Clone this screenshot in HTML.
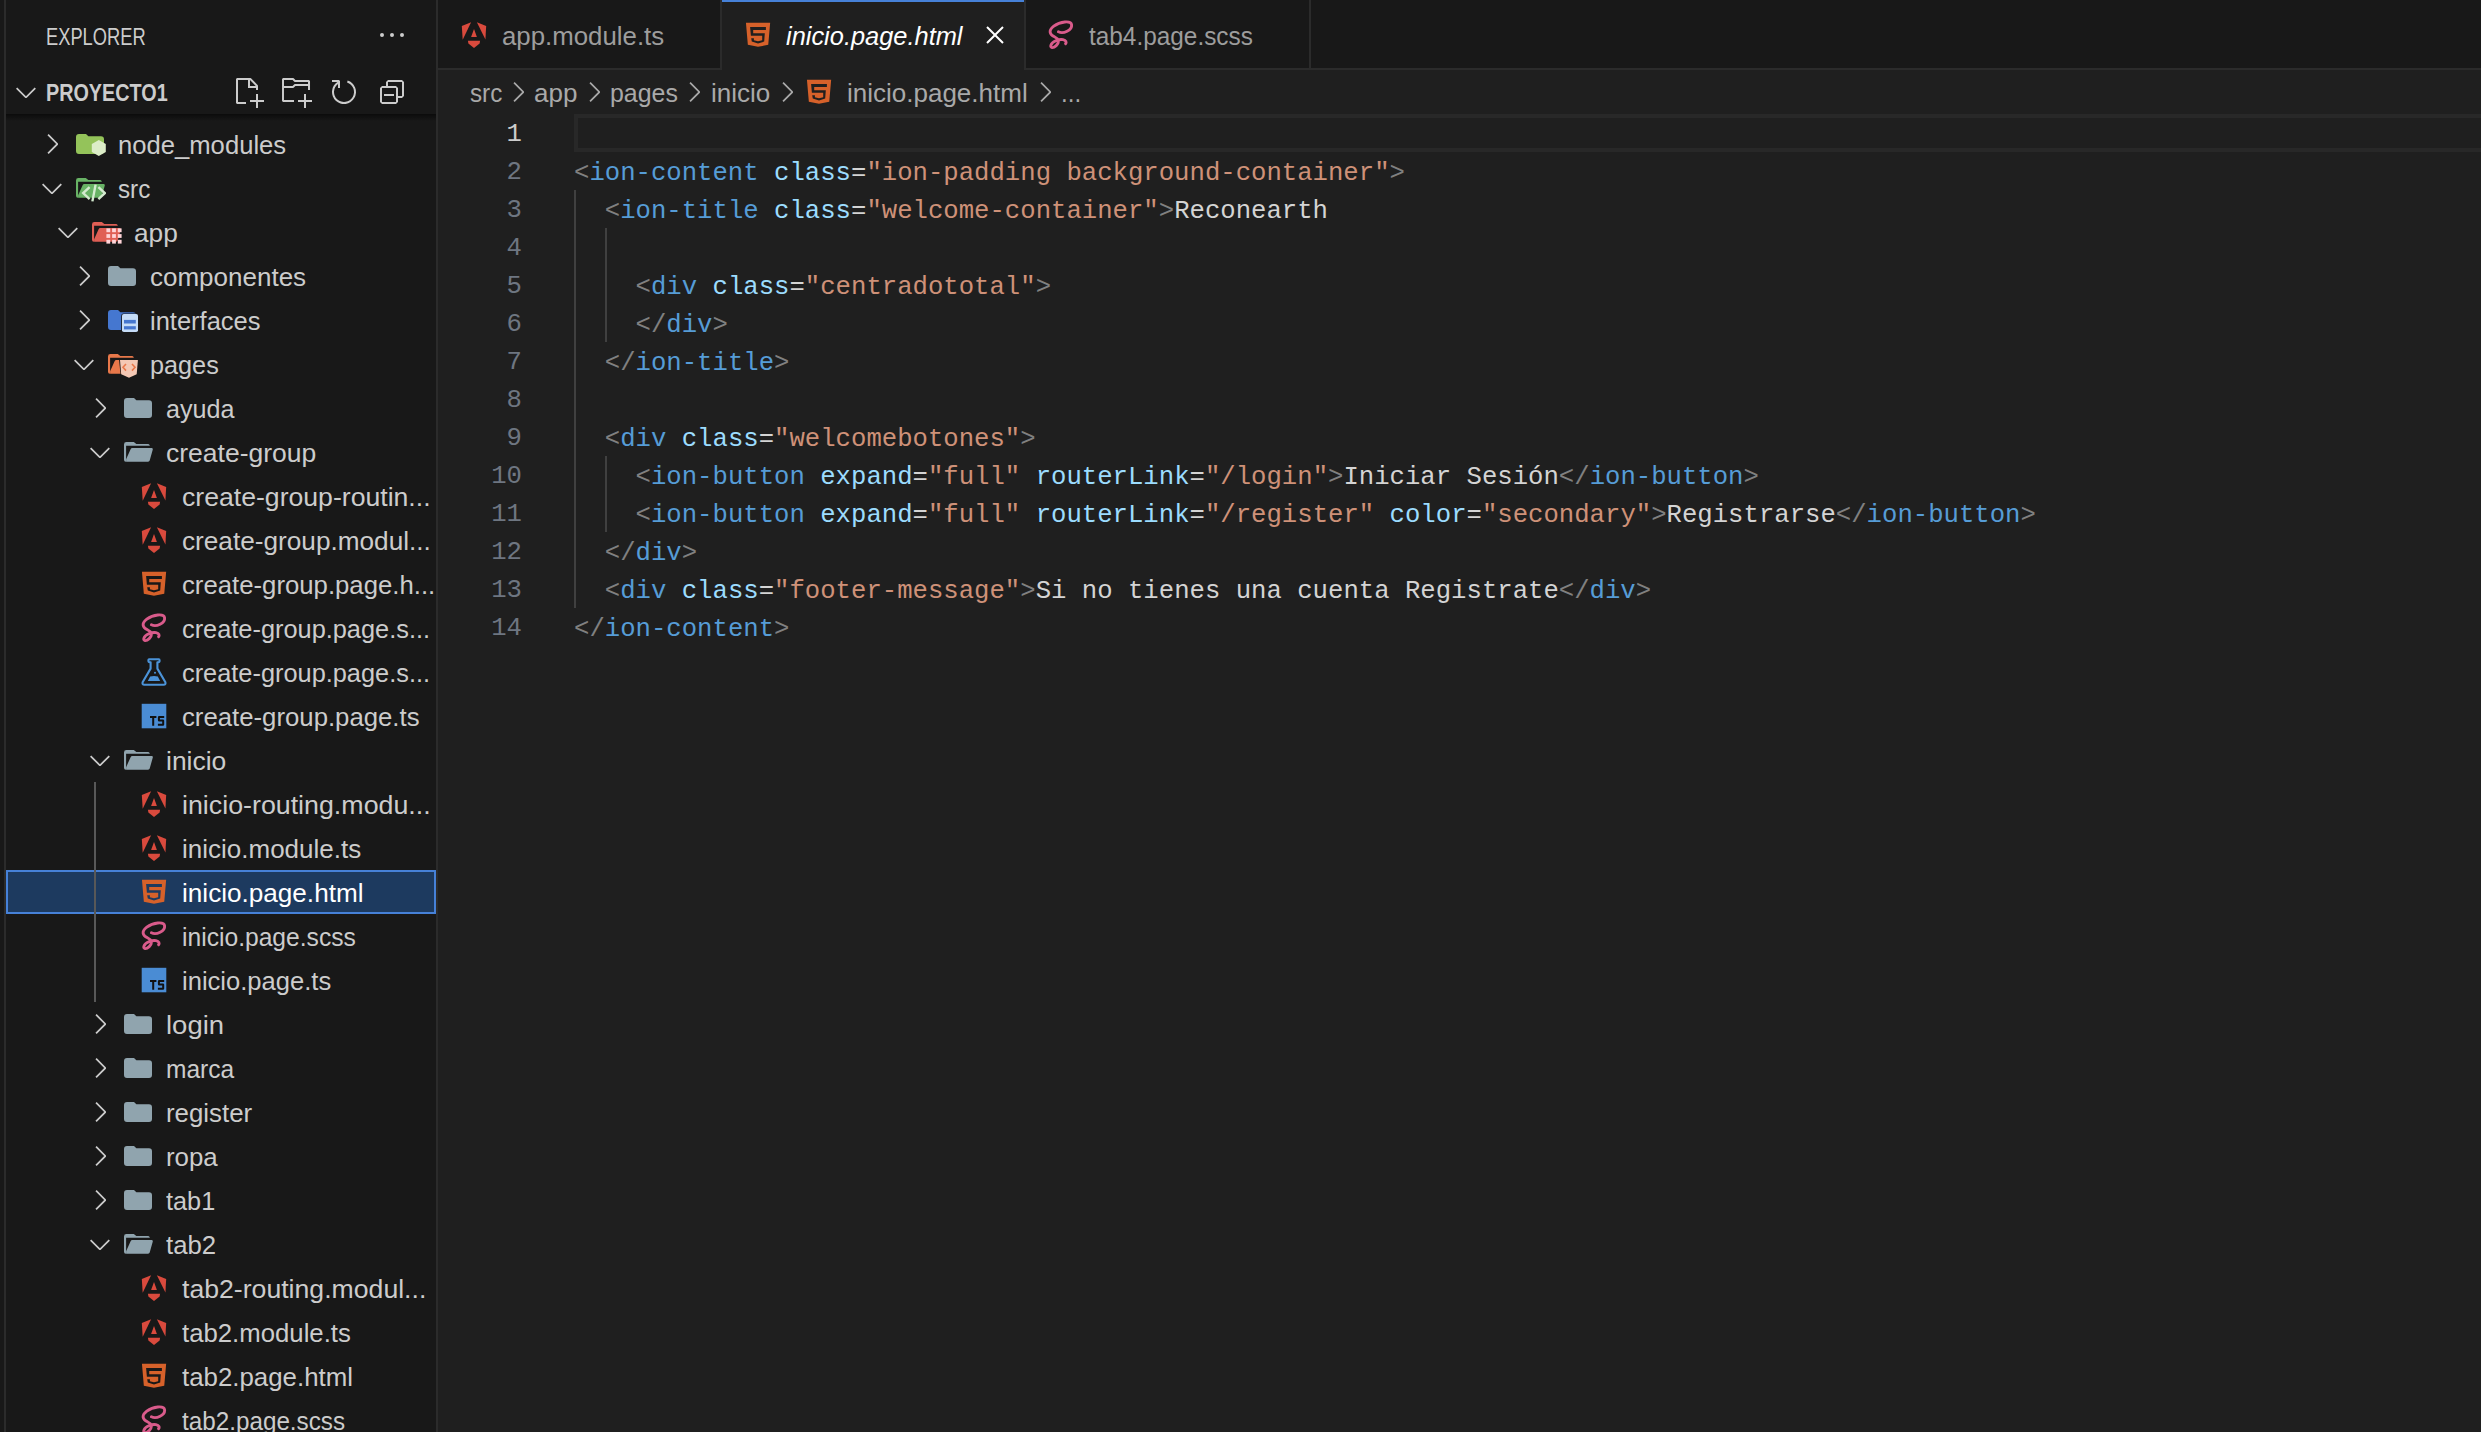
<!DOCTYPE html>
<html><head><meta charset="utf-8"><style>
html,body{margin:0;padding:0;}
body{width:2481px;height:1432px;position:relative;overflow:hidden;background:#1f1f1f;font-family:"Liberation Sans",sans-serif;}
.abs{position:absolute;}
.tl{position:absolute;height:44px;line-height:44px;font-size:26px;white-space:nowrap;transform-origin:0 0;}
.tab{position:absolute;top:1px;height:70px;line-height:70px;font-size:26px;white-space:nowrap;transform-origin:0 0;}
.bc{position:absolute;top:71px;height:44px;line-height:44px;font-size:26px;color:#a9a9a9;white-space:nowrap;transform-origin:0 0;}
.ln{position:absolute;left:440px;width:82px;text-align:right;height:38px;line-height:38px;font-family:"Liberation Mono",monospace;font-size:25.65px;padding-top:2px;box-sizing:border-box;}
.cl{position:absolute;left:574px;height:38px;line-height:38px;font-family:"Liberation Mono",monospace;font-size:25.65px;white-space:pre;color:#cccccc;padding-top:3px;box-sizing:border-box;}
.p{color:#808080} .t{color:#569cd6} .a{color:#9cdcfe} .s{color:#ce9178} .x{color:#d4d4d4}
</style></head><body>
<div class="abs" style="left:0;top:0;width:4px;height:1432px;background:#181818"></div>
<div class="abs" style="left:4px;top:0;width:2px;height:1432px;background:#2b2b2b"></div>
<div class="abs" style="left:6px;top:0;width:430px;height:1432px;background:#181818;overflow:hidden">
</div>
<div class="abs" style="left:436px;top:0;width:2px;height:1432px;background:#2b2b2b"></div>
<div class="abs" style="left:46px;top:15px;font-size:23px;line-height:44px;color:#cccccc;transform:scaleX(0.795);transform-origin:0 0">EXPLORER</div>
<div class="abs" style="left:46px;top:71px;font-size:23px;line-height:44px;color:#cccccc;font-weight:bold;transform:scaleX(0.86);transform-origin:0 0">PROYECTO1</div>
<svg style="position:absolute;left:232px;top:76px" width="32" height="32" viewBox="0 0 16 16" ><path fill="#cccccc" fill-rule="evenodd" d="M9.5 1.1l3.4 3.5.1.4v2h-1V6H8V2H3v11h4v1H2.5l-.5-.5v-12l.5-.5h6.7l.3.1zM9 2v3h2.9L9 2zm4 14h-1v-3H9v-1h3V9h1v3h3v1h-3v3z"/></svg>
<svg style="position:absolute;left:280px;top:76px" width="32" height="32" viewBox="0 0 16 16" ><path fill="#cccccc" fill-rule="evenodd" d="M14.5 2H7.71l-.85-.85L6.51 1h-5l-.5.5v11l.5.5H7v-1H1.99V6h4.49l.35-.15.86-.86H14v1.5l-.001.51h1.011V2.5L14.5 2zm-.51 2h-6.5l-.35.15-.86.86H2v-3h4.29l.85.85.36.15H14l-.01.99zM13 16h-1v-3H9v-1h3V9h1v3h3v1h-3v3z"/></svg>
<svg style="position:absolute;left:328px;top:76px" width="32" height="32" viewBox="0 0 16 16" ><path fill="#cccccc" fill-rule="evenodd" d="M4.681 3H2V2h3.5l.5.5V6H5V4a5 5 0 1 0 4.53-.761l.302-.954A6 6 0 1 1 4.681 3z"/></svg>
<svg style="position:absolute;left:376px;top:76px" width="32" height="32" viewBox="0 0 16 16" ><path fill="#cccccc" d="M9 9H4v1h5V9z"/><path fill="#cccccc" fill-rule="evenodd" d="M5 3l1-1h7l1 1v7l-1 1h-2v2l-1 1H3l-1-1V6l1-1h2V3zm1 2h4l1 1v4h2V3H6v2zm4 1H3v7h7V6z"/></svg>
<svg style="position:absolute;left:376px;top:19px" width="32" height="32" viewBox="0 0 16 16" ><path fill="#cccccc" d="M4 8a1 1 0 1 1-2 0 1 1 0 0 1 2 0zm5 0a1 1 0 1 1-2 0 1 1 0 0 1 2 0zm5 0a1 1 0 1 1-2 0 1 1 0 0 1 2 0z"/></svg>
<svg style="position:absolute;left:10px;top:76px" width="32" height="32" viewBox="0 0 16 16" ><path fill="#cccccc" d="M7.976 10.072l4.357-4.357.62.618L8.284 11h-.618L3 6.333l.619-.618 4.357 4.357z"/></svg>
<div class="abs" style="left:6px;top:114px;width:430px;height:1318px;overflow:hidden">
<div style="position:absolute;left:-6px;top:-114px;width:436px;height:1432px">
<svg style="position:absolute;left:36px;top:128px" width="32" height="32" viewBox="0 0 16 16" ><path fill="#cccccc" d="M10.072 8.024L5.715 3.667l.618-.62L11 7.716v.618L6.333 13l-.618-.619 4.357-4.357z"/></svg>
<svg style="position:absolute;left:74px;top:128px" width="32" height="32" viewBox="0 0 16 16" ><path fill="#94c35a" d="M1 4.5Q1 3 2.5 3H6l1.2 1.1H13.5Q15 4.1 15 5.6V11.5Q15 13 13.5 13H2.5Q1 13 1 11.5z"/><path fill="#dcedc8" d="M12.4 6L15.9 8V12L12.4 14L8.9 12V8z"/></svg>
<div class="tl" style="left:118px;top:123px;color:#cccccc;transform:scaleX(0.9858)">node_modules</div>
<svg style="position:absolute;left:36px;top:172px" width="32" height="32" viewBox="0 0 16 16" ><path fill="#cccccc" d="M7.976 10.072l4.357-4.357.62.618L8.284 11h-.618L3 6.333l.619-.618 4.357 4.357z"/></svg>
<svg style="position:absolute;left:74px;top:172px" width="32" height="32" viewBox="0 0 16 16" ><path fill="#68b265" d="M1 4.2Q1 3 2.2 3H5.9L7.15 4.05H13.1Q13.7 4.05 13.95 4.9H2.05V12.83H1.9Q1 12.83 1 11.9z"/><path fill="#68b265" d="M5.2 6.05H14.9Q15.55 6.1 15.4 6.8L13.85 12.25Q13.7 12.83 13.05 12.83H2.05V11.6L4.3 6.6Q4.55 6.05 5.2 6.05z"/><path fill="none" stroke="#d4ebcf" stroke-width="1.2" d="M7.8 7.55L4.6 10.56L7.8 13.58M12.2 7.55L15.4 10.56L12.2 13.58M10.8 6.3L9.2 14.7"/></svg>
<div class="tl" style="left:118px;top:167px;color:#cccccc;transform:scaleX(0.9303)">src</div>
<svg style="position:absolute;left:52px;top:216px" width="32" height="32" viewBox="0 0 16 16" ><path fill="#cccccc" d="M7.976 10.072l4.357-4.357.62.618L8.284 11h-.618L3 6.333l.619-.618 4.357 4.357z"/></svg>
<svg style="position:absolute;left:90px;top:216px" width="32" height="32" viewBox="0 0 16 16" ><path fill="#e05f55" d="M1 4.2Q1 3 2.2 3H5.9L7.15 4.05H13.1Q13.7 4.05 13.95 4.9H2.05V12.83H1.9Q1 12.83 1 11.9z"/><path fill="#e05f55" d="M5.2 6.05H14.9Q15.55 6.1 15.4 6.8L13.85 12.25Q13.7 12.83 13.05 12.83H2.05V11.6L4.3 6.6Q4.55 6.05 5.2 6.05z"/><rect x="7.6" y="5.6" width="8.6" height="8.6" fill="#181818" opacity="0"/><rect x="8.20" y="6.20" width="1.9" height="1.9" fill="#ffd4d8"/><rect x="8.20" y="9.05" width="1.9" height="1.9" fill="#ffd4d8"/><rect x="8.20" y="11.90" width="1.9" height="1.9" fill="#ffd4d8"/><rect x="11.05" y="6.20" width="1.9" height="1.9" fill="#ffd4d8"/><rect x="11.05" y="9.05" width="1.9" height="1.9" fill="#ffd4d8"/><rect x="11.05" y="11.90" width="1.9" height="1.9" fill="#ffd4d8"/><rect x="13.90" y="6.20" width="1.9" height="1.9" fill="#ffd4d8"/><rect x="13.90" y="9.05" width="1.9" height="1.9" fill="#ffd4d8"/><rect x="13.90" y="11.90" width="1.9" height="1.9" fill="#ffd4d8"/></svg>
<div class="tl" style="left:134px;top:211px;color:#cccccc;transform:scaleX(1.0095)">app</div>
<svg style="position:absolute;left:68px;top:260px" width="32" height="32" viewBox="0 0 16 16" ><path fill="#cccccc" d="M10.072 8.024L5.715 3.667l.618-.62L11 7.716v.618L6.333 13l-.618-.619 4.357-4.357z"/></svg>
<svg style="position:absolute;left:106px;top:260px" width="32" height="32" viewBox="0 0 16 16" ><path fill="#90a4ae" d="M1 4.5Q1 3 2.5 3H6l1.2 1.1H13.5Q15 4.1 15 5.6V11.5Q15 13 13.5 13H2.5Q1 13 1 11.5z"/></svg>
<div class="tl" style="left:150px;top:255px;color:#cccccc;transform:scaleX(1.0000)">componentes</div>
<svg style="position:absolute;left:68px;top:304px" width="32" height="32" viewBox="0 0 16 16" ><path fill="#cccccc" d="M10.072 8.024L5.715 3.667l.618-.62L11 7.716v.618L6.333 13l-.618-.619 4.357-4.357z"/></svg>
<svg style="position:absolute;left:106px;top:304px" width="32" height="32" viewBox="0 0 16 16" ><path fill="#4577d0" d="M1 4.5Q1 3 2.5 3H6l1.2 1.1H13.5Q15 4.1 15 5.6V11.5Q15 13 13.5 13H2.5Q1 13 1 11.5z"/><rect x="7.6" y="4.8" width="8.6" height="9.5" rx="1.2" fill="#181818"/><rect x="8.0" y="5.0" width="8.0" height="9.0" rx="0.9" fill="#c5dcf7"/><rect x="9.0" y="7.95" width="5.9" height="1.8" fill="#4577d0"/><rect x="9.0" y="11.1" width="5.9" height="1.6" fill="#4577d0"/></svg>
<div class="tl" style="left:150px;top:299px;color:#cccccc;transform:scaleX(0.9802)">interfaces</div>
<svg style="position:absolute;left:68px;top:348px" width="32" height="32" viewBox="0 0 16 16" ><path fill="#cccccc" d="M7.976 10.072l4.357-4.357.62.618L8.284 11h-.618L3 6.333l.619-.618 4.357 4.357z"/></svg>
<svg style="position:absolute;left:106px;top:348px" width="32" height="32" viewBox="0 0 16 16" ><path fill="#e8784a" d="M1 4.2Q1 3 2.2 3H5.9L7.15 4.05H13.1Q13.7 4.05 13.95 4.9H2.05V12.83H1.9Q1 12.83 1 11.9z"/><path fill="#e8784a" d="M5.2 6.05H14.9Q15.55 6.1 15.4 6.8L13.85 12.25Q13.7 12.83 13.05 12.83H2.05V11.6L4.3 6.6Q4.55 6.05 5.2 6.05z"/><path fill="#181818" d="M6.5 5.6H16.3L15.7 13.4L11.5 15.4L7.3 13.4z"/><path fill="#f4c8b4" d="M7.0 6.0H15.95L15.35 13.1L11.5 14.85L7.6 13.1z"/><path fill="none" stroke="#e8784a" stroke-width="0.8" d="M10.0 8.0L8.5 9.65L10.0 11.3M13.0 8.0L14.5 9.65L13.0 11.3"/></svg>
<div class="tl" style="left:150px;top:343px;color:#cccccc;transform:scaleX(0.9710)">pages</div>
<svg style="position:absolute;left:84px;top:392px" width="32" height="32" viewBox="0 0 16 16" ><path fill="#cccccc" d="M10.072 8.024L5.715 3.667l.618-.62L11 7.716v.618L6.333 13l-.618-.619 4.357-4.357z"/></svg>
<svg style="position:absolute;left:122px;top:392px" width="32" height="32" viewBox="0 0 16 16" ><path fill="#90a4ae" d="M1 4.5Q1 3 2.5 3H6l1.2 1.1H13.5Q15 4.1 15 5.6V11.5Q15 13 13.5 13H2.5Q1 13 1 11.5z"/></svg>
<div class="tl" style="left:166px;top:387px;color:#cccccc;transform:scaleX(0.9671)">ayuda</div>
<svg style="position:absolute;left:84px;top:436px" width="32" height="32" viewBox="0 0 16 16" ><path fill="#cccccc" d="M7.976 10.072l4.357-4.357.62.618L8.284 11h-.618L3 6.333l.619-.618 4.357 4.357z"/></svg>
<svg style="position:absolute;left:122px;top:436px" width="32" height="32" viewBox="0 0 16 16" ><path fill="#90a4ae" d="M1 4.2Q1 3 2.2 3H5.9L7.15 4.05H13.1Q13.7 4.05 13.95 4.9H2.05V12.83H1.9Q1 12.83 1 11.9z"/><path fill="#90a4ae" d="M5.2 6.05H14.9Q15.55 6.1 15.4 6.8L13.85 12.25Q13.7 12.83 13.05 12.83H2.05V11.6L4.3 6.6Q4.55 6.05 5.2 6.05z"/></svg>
<div class="tl" style="left:166px;top:431px;color:#cccccc;transform:scaleX(1.0192)">create-group</div>
<svg style="position:absolute;left:138px;top:480px" width="32" height="32" viewBox="0 0 16 16" ><path fill="#d94a3d" d="M1.9 3.55L6.55 1.6L2.35 10.4z"/><path fill="#d94a3d" d="M9.45 1.6L14.1 3.55L13.7 10.2z"/><path fill="#d94a3d" d="M8 5.0L9.45 8.95H6.55z"/><path fill="#d94a3d" d="M4.95 10.9H11.05L10.8 12.3L8 14.45L5.2 12.3z"/></svg>
<div class="tl" style="left:182px;top:475px;color:#cccccc;transform:scaleX(1.0237)">create-group-routin...</div>
<svg style="position:absolute;left:138px;top:524px" width="32" height="32" viewBox="0 0 16 16" ><path fill="#d94a3d" d="M1.9 3.55L6.55 1.6L2.35 10.4z"/><path fill="#d94a3d" d="M9.45 1.6L14.1 3.55L13.7 10.2z"/><path fill="#d94a3d" d="M8 5.0L9.45 8.95H6.55z"/><path fill="#d94a3d" d="M4.95 10.9H11.05L10.8 12.3L8 14.45L5.2 12.3z"/></svg>
<div class="tl" style="left:182px;top:519px;color:#cccccc;transform:scaleX(1.0070)">create-group.modul...</div>
<svg style="position:absolute;left:138px;top:568px" width="32" height="32" viewBox="0 0 16 16" ><path fill="#d6612a" fill-rule="evenodd" d="M1.97 1.93H14.08L13.13 12.92L8 13.93L2.92 12.92z M4.05 4.0H11.95V5.44H5.6V7.1H11.4L11.1 11.3L8 12.25L4.9 11.3L4.6 9.6H5.95V10.6L8 11.1L10.1 10.6V8.35H4.45z"/></svg>
<div class="tl" style="left:182px;top:563px;color:#cccccc;transform:scaleX(0.9897)">create-group.page.h...</div>
<svg style="position:absolute;left:138px;top:612px" width="32" height="32" viewBox="0 0 16 16" ><path fill="none" stroke="#d95b8b" stroke-width="1.45" stroke-linecap="round" d="M6.7 6.4C9.2 7.6 13.6 5.6 13.3 2.9C13 0.6 7.5 1.2 4.4 3.6C1.3 6 2.6 7.9 4.7 8.9C6.8 9.9 7.4 11.6 5.6 13.3C4 14.8 2.4 14.5 3 13C3.6 11.4 6.8 9.9 9 10.3C10.6 10.6 10.8 11.8 10.3 12.3"/></svg>
<div class="tl" style="left:182px;top:607px;color:#cccccc;transform:scaleX(0.9750)">create-group.page.s...</div>
<svg style="position:absolute;left:138px;top:656px" width="32" height="32" viewBox="0 0 16 16" ><path fill="none" stroke="#4b93d8" stroke-width="1.05" stroke-linejoin="round" d="M5.6 1.6H10.4Q10.8 1.6 10.8 2.3Q10.8 3.1 10.2 3.1H9.7V6.3L13.7 13.1Q14 14.4 12.8 14.4H3.2Q2 14.4 2.3 13.1L6.3 6.3V3.1H5.8Q5.2 3.1 5.2 2.3Q5.2 1.6 5.6 1.6z"/><path fill="#4b93d8" d="M4.9 12.5L6.1 10.2Q8 9.8 9.9 10.2L11.1 12.5z"/><circle cx="8.5" cy="8.4" r="0.5" fill="#4b93d8"/></svg>
<div class="tl" style="left:182px;top:651px;color:#cccccc;transform:scaleX(0.9750)">create-group.page.s...</div>
<svg style="position:absolute;left:138px;top:700px" width="32" height="32" viewBox="0 0 16 16" ><rect x="1.85" y="1.9" width="12.3" height="12.25" fill="#4a8cd4"/><path fill="#111" d="M6.0 8.0H9.2V9.0H8.1V12.9H7.1V9.0H6.0z"/><path fill="#111" d="M13.1 8.0H10.6Q9.95 8.0 9.95 8.65V10.1Q9.95 10.75 10.6 10.75H12.1V11.9H9.95V12.9H12.45Q13.1 12.9 13.1 12.25V10.4Q13.1 9.75 12.45 9.75H10.95V9.0H13.1z"/></svg>
<div class="tl" style="left:182px;top:695px;color:#cccccc;transform:scaleX(0.9900)">create-group.page.ts</div>
<svg style="position:absolute;left:84px;top:744px" width="32" height="32" viewBox="0 0 16 16" ><path fill="#cccccc" d="M7.976 10.072l4.357-4.357.62.618L8.284 11h-.618L3 6.333l.619-.618 4.357 4.357z"/></svg>
<svg style="position:absolute;left:122px;top:744px" width="32" height="32" viewBox="0 0 16 16" ><path fill="#90a4ae" d="M1 4.2Q1 3 2.2 3H5.9L7.15 4.05H13.1Q13.7 4.05 13.95 4.9H2.05V12.83H1.9Q1 12.83 1 11.9z"/><path fill="#90a4ae" d="M5.2 6.05H14.9Q15.55 6.1 15.4 6.8L13.85 12.25Q13.7 12.83 13.05 12.83H2.05V11.6L4.3 6.6Q4.55 6.05 5.2 6.05z"/></svg>
<div class="tl" style="left:166px;top:739px;color:#cccccc;transform:scaleX(1.0172)">inicio</div>
<svg style="position:absolute;left:138px;top:788px" width="32" height="32" viewBox="0 0 16 16" ><path fill="#d94a3d" d="M1.9 3.55L6.55 1.6L2.35 10.4z"/><path fill="#d94a3d" d="M9.45 1.6L14.1 3.55L13.7 10.2z"/><path fill="#d94a3d" d="M8 5.0L9.45 8.95H6.55z"/><path fill="#d94a3d" d="M4.95 10.9H11.05L10.8 12.3L8 14.45L5.2 12.3z"/></svg>
<div class="tl" style="left:182px;top:783px;color:#cccccc;transform:scaleX(1.0303)">inicio-routing.modu...</div>
<svg style="position:absolute;left:138px;top:832px" width="32" height="32" viewBox="0 0 16 16" ><path fill="#d94a3d" d="M1.9 3.55L6.55 1.6L2.35 10.4z"/><path fill="#d94a3d" d="M9.45 1.6L14.1 3.55L13.7 10.2z"/><path fill="#d94a3d" d="M8 5.0L9.45 8.95H6.55z"/><path fill="#d94a3d" d="M4.95 10.9H11.05L10.8 12.3L8 14.45L5.2 12.3z"/></svg>
<div class="tl" style="left:182px;top:827px;color:#cccccc;transform:scaleX(1.0000)">inicio.module.ts</div>
<div style="position:absolute;left:6px;top:870px;width:430px;height:44px;box-sizing:border-box;background:#1d3a5f;border:2px solid #4681d8"></div>
<svg style="position:absolute;left:138px;top:876px" width="32" height="32" viewBox="0 0 16 16" ><path fill="#d6612a" fill-rule="evenodd" d="M1.97 1.93H14.08L13.13 12.92L8 13.93L2.92 12.92z M4.05 4.0H11.95V5.44H5.6V7.1H11.4L11.1 11.3L8 12.25L4.9 11.3L4.6 9.6H5.95V10.6L8 11.1L10.1 10.6V8.35H4.45z"/></svg>
<div class="tl" style="left:182px;top:871px;color:#ffffff;transform:scaleX(1.0045)">inicio.page.html</div>
<svg style="position:absolute;left:138px;top:920px" width="32" height="32" viewBox="0 0 16 16" ><path fill="none" stroke="#d95b8b" stroke-width="1.45" stroke-linecap="round" d="M6.7 6.4C9.2 7.6 13.6 5.6 13.3 2.9C13 0.6 7.5 1.2 4.4 3.6C1.3 6 2.6 7.9 4.7 8.9C6.8 9.9 7.4 11.6 5.6 13.3C4 14.8 2.4 14.5 3 13C3.6 11.4 6.8 9.9 9 10.3C10.6 10.6 10.8 11.8 10.3 12.3"/></svg>
<div class="tl" style="left:182px;top:915px;color:#cccccc;transform:scaleX(0.9473)">inicio.page.scss</div>
<svg style="position:absolute;left:138px;top:964px" width="32" height="32" viewBox="0 0 16 16" ><rect x="1.85" y="1.9" width="12.3" height="12.25" fill="#4a8cd4"/><path fill="#111" d="M6.0 8.0H9.2V9.0H8.1V12.9H7.1V9.0H6.0z"/><path fill="#111" d="M13.1 8.0H10.6Q9.95 8.0 9.95 8.65V10.1Q9.95 10.75 10.6 10.75H12.1V11.9H9.95V12.9H12.45Q13.1 12.9 13.1 12.25V10.4Q13.1 9.75 12.45 9.75H10.95V9.0H13.1z"/></svg>
<div class="tl" style="left:182px;top:959px;color:#cccccc;transform:scaleX(0.9833)">inicio.page.ts</div>
<svg style="position:absolute;left:84px;top:1008px" width="32" height="32" viewBox="0 0 16 16" ><path fill="#cccccc" d="M10.072 8.024L5.715 3.667l.618-.62L11 7.716v.618L6.333 13l-.618-.619 4.357-4.357z"/></svg>
<svg style="position:absolute;left:122px;top:1008px" width="32" height="32" viewBox="0 0 16 16" ><path fill="#90a4ae" d="M1 4.5Q1 3 2.5 3H6l1.2 1.1H13.5Q15 4.1 15 5.6V11.5Q15 13 13.5 13H2.5Q1 13 1 11.5z"/></svg>
<div class="tl" style="left:166px;top:1003px;color:#cccccc;transform:scaleX(1.0566)">login</div>
<svg style="position:absolute;left:84px;top:1052px" width="32" height="32" viewBox="0 0 16 16" ><path fill="#cccccc" d="M10.072 8.024L5.715 3.667l.618-.62L11 7.716v.618L6.333 13l-.618-.619 4.357-4.357z"/></svg>
<svg style="position:absolute;left:122px;top:1052px" width="32" height="32" viewBox="0 0 16 16" ><path fill="#90a4ae" d="M1 4.5Q1 3 2.5 3H6l1.2 1.1H13.5Q15 4.1 15 5.6V11.5Q15 13 13.5 13H2.5Q1 13 1 11.5z"/></svg>
<div class="tl" style="left:166px;top:1047px;color:#cccccc;transform:scaleX(0.9444)">marca</div>
<svg style="position:absolute;left:84px;top:1096px" width="32" height="32" viewBox="0 0 16 16" ><path fill="#cccccc" d="M10.072 8.024L5.715 3.667l.618-.62L11 7.716v.618L6.333 13l-.618-.619 4.357-4.357z"/></svg>
<svg style="position:absolute;left:122px;top:1096px" width="32" height="32" viewBox="0 0 16 16" ><path fill="#90a4ae" d="M1 4.5Q1 3 2.5 3H6l1.2 1.1H13.5Q15 4.1 15 5.6V11.5Q15 13 13.5 13H2.5Q1 13 1 11.5z"/></svg>
<div class="tl" style="left:166px;top:1091px;color:#cccccc;transform:scaleX(0.9942)">register</div>
<svg style="position:absolute;left:84px;top:1140px" width="32" height="32" viewBox="0 0 16 16" ><path fill="#cccccc" d="M10.072 8.024L5.715 3.667l.618-.62L11 7.716v.618L6.333 13l-.618-.619 4.357-4.357z"/></svg>
<svg style="position:absolute;left:122px;top:1140px" width="32" height="32" viewBox="0 0 16 16" ><path fill="#90a4ae" d="M1 4.5Q1 3 2.5 3H6l1.2 1.1H13.5Q15 4.1 15 5.6V11.5Q15 13 13.5 13H2.5Q1 13 1 11.5z"/></svg>
<div class="tl" style="left:166px;top:1135px;color:#cccccc;transform:scaleX(0.9941)">ropa</div>
<svg style="position:absolute;left:84px;top:1184px" width="32" height="32" viewBox="0 0 16 16" ><path fill="#cccccc" d="M10.072 8.024L5.715 3.667l.618-.62L11 7.716v.618L6.333 13l-.618-.619 4.357-4.357z"/></svg>
<svg style="position:absolute;left:122px;top:1184px" width="32" height="32" viewBox="0 0 16 16" ><path fill="#90a4ae" d="M1 4.5Q1 3 2.5 3H6l1.2 1.1H13.5Q15 4.1 15 5.6V11.5Q15 13 13.5 13H2.5Q1 13 1 11.5z"/></svg>
<div class="tl" style="left:166px;top:1179px;color:#cccccc;transform:scaleX(0.9720)">tab1</div>
<svg style="position:absolute;left:84px;top:1228px" width="32" height="32" viewBox="0 0 16 16" ><path fill="#cccccc" d="M7.976 10.072l4.357-4.357.62.618L8.284 11h-.618L3 6.333l.619-.618 4.357 4.357z"/></svg>
<svg style="position:absolute;left:122px;top:1228px" width="32" height="32" viewBox="0 0 16 16" ><path fill="#90a4ae" d="M1 4.2Q1 3 2.2 3H5.9L7.15 4.05H13.1Q13.7 4.05 13.95 4.9H2.05V12.83H1.9Q1 12.83 1 11.9z"/><path fill="#90a4ae" d="M5.2 6.05H14.9Q15.55 6.1 15.4 6.8L13.85 12.25Q13.7 12.83 13.05 12.83H2.05V11.6L4.3 6.6Q4.55 6.05 5.2 6.05z"/></svg>
<div class="tl" style="left:166px;top:1223px;color:#cccccc;transform:scaleX(0.9900)">tab2</div>
<svg style="position:absolute;left:138px;top:1272px" width="32" height="32" viewBox="0 0 16 16" ><path fill="#d94a3d" d="M1.9 3.55L6.55 1.6L2.35 10.4z"/><path fill="#d94a3d" d="M9.45 1.6L14.1 3.55L13.7 10.2z"/><path fill="#d94a3d" d="M8 5.0L9.45 8.95H6.55z"/><path fill="#d94a3d" d="M4.95 10.9H11.05L10.8 12.3L8 14.45L5.2 12.3z"/></svg>
<div class="tl" style="left:182px;top:1267px;color:#cccccc;transform:scaleX(1.0245)">tab2-routing.modul...</div>
<svg style="position:absolute;left:138px;top:1316px" width="32" height="32" viewBox="0 0 16 16" ><path fill="#d94a3d" d="M1.9 3.55L6.55 1.6L2.35 10.4z"/><path fill="#d94a3d" d="M9.45 1.6L14.1 3.55L13.7 10.2z"/><path fill="#d94a3d" d="M8 5.0L9.45 8.95H6.55z"/><path fill="#d94a3d" d="M4.95 10.9H11.05L10.8 12.3L8 14.45L5.2 12.3z"/></svg>
<div class="tl" style="left:182px;top:1311px;color:#cccccc;transform:scaleX(0.9900)">tab2.module.ts</div>
<svg style="position:absolute;left:138px;top:1360px" width="32" height="32" viewBox="0 0 16 16" ><path fill="#d6612a" fill-rule="evenodd" d="M1.97 1.93H14.08L13.13 12.92L8 13.93L2.92 12.92z M4.05 4.0H11.95V5.44H5.6V7.1H11.4L11.1 11.3L8 12.25L4.9 11.3L4.6 9.6H5.95V10.6L8 11.1L10.1 10.6V8.35H4.45z"/></svg>
<div class="tl" style="left:182px;top:1355px;color:#cccccc;transform:scaleX(0.9942)">tab2.page.html</div>
<svg style="position:absolute;left:138px;top:1404px" width="32" height="32" viewBox="0 0 16 16" ><path fill="none" stroke="#d95b8b" stroke-width="1.45" stroke-linecap="round" d="M6.7 6.4C9.2 7.6 13.6 5.6 13.3 2.9C13 0.6 7.5 1.2 4.4 3.6C1.3 6 2.6 7.9 4.7 8.9C6.8 9.9 7.4 11.6 5.6 13.3C4 14.8 2.4 14.5 3 13C3.6 11.4 6.8 9.9 9 10.3C10.6 10.6 10.8 11.8 10.3 12.3"/></svg>
<div class="tl" style="left:182px;top:1399px;color:#cccccc;transform:scaleX(0.9326)">tab2.page.scss</div>
<div style="position:absolute;left:94px;top:782px;width:2px;height:220px;background:#585858"></div>
</div>
</div>
<div class="abs" style="left:6px;top:114px;width:430px;height:7px;background:linear-gradient(#000000 0%, rgba(0,0,0,0) 100%);opacity:0.55"></div>
<!-- tab bar -->
<div class="abs" style="left:438px;top:0;width:2043px;height:70px;background:#181818"></div>
<div class="abs" style="left:438px;top:68px;width:2043px;height:2px;background:#2b2b2b"></div>
<div class="abs" style="left:720px;top:0;width:2px;height:68px;background:#2b2b2b"></div>
<div class="abs" style="left:722px;top:0;width:302px;height:70px;background:#1f1f1f"></div>
<div class="abs" style="left:722px;top:0;width:302px;height:2px;background:#4681d8"></div>
<div class="abs" style="left:1024px;top:0;width:2px;height:68px;background:#2b2b2b"></div>
<div class="abs" style="left:1309px;top:0;width:2px;height:68px;background:#2b2b2b"></div>
<svg style="position:absolute;left:458px;top:19px" width="32" height="32" viewBox="0 0 16 16" ><path fill="#d94a3d" d="M1.9 3.55L6.55 1.6L2.35 10.4z"/><path fill="#d94a3d" d="M9.45 1.6L14.1 3.55L13.7 10.2z"/><path fill="#d94a3d" d="M8 5.0L9.45 8.95H6.55z"/><path fill="#d94a3d" d="M4.95 10.9H11.05L10.8 12.3L8 14.45L5.2 12.3z"/></svg>
<div class="tab" style="left:502px;color:#9d9d9d;transform:scaleX(0.993)">app.module.ts</div>
<svg style="position:absolute;left:742px;top:19px" width="32" height="32" viewBox="0 0 16 16" ><path fill="#d6612a" fill-rule="evenodd" d="M1.97 1.93H14.08L13.13 12.92L8 13.93L2.92 12.92z M4.05 4.0H11.95V5.44H5.6V7.1H11.4L11.1 11.3L8 12.25L4.9 11.3L4.6 9.6H5.95V10.6L8 11.1L10.1 10.6V8.35H4.45z"/></svg>
<div class="tab" style="left:786px;color:#ffffff;font-style:italic;transform:scaleX(0.977)">inicio.page.html</div>
<svg style="position:absolute;left:979px;top:19px" width="32" height="32" viewBox="0 0 16 16" ><path fill="#ffffff" fill-rule="evenodd" d="M8 8.707l3.646 3.647.708-.707L8.707 8l3.647-3.646-.707-.708L8 7.293 4.354 3.646l-.707.708L7.293 8l-3.646 3.646.707.708L8 8.707z"/></svg>
<svg style="position:absolute;left:1045px;top:19px" width="32" height="32" viewBox="0 0 16 16" ><path fill="none" stroke="#d95b8b" stroke-width="1.45" stroke-linecap="round" d="M6.7 6.4C9.2 7.6 13.6 5.6 13.3 2.9C13 0.6 7.5 1.2 4.4 3.6C1.3 6 2.6 7.9 4.7 8.9C6.8 9.9 7.4 11.6 5.6 13.3C4 14.8 2.4 14.5 3 13C3.6 11.4 6.8 9.9 9 10.3C10.6 10.6 10.8 11.8 10.3 12.3"/></svg>
<div class="tab" style="left:1089px;color:#9d9d9d;transform:scaleX(0.937)">tab4.page.scss</div>
<div class="bc" style="left:470px;transform:scaleX(0.93)">src</div>
<svg style="position:absolute;left:502px;top:76px" width="32" height="32" viewBox="0 0 16 16" ><path fill="#a9a9a9" d="M10.072 8.024L5.715 3.667l.618-.62L11 7.716v.618L6.333 13l-.618-.619 4.357-4.357z"/></svg>
<div class="bc" style="left:534px">app</div>
<svg style="position:absolute;left:578px;top:76px" width="32" height="32" viewBox="0 0 16 16" ><path fill="#a9a9a9" d="M10.072 8.024L5.715 3.667l.618-.62L11 7.716v.618L6.333 13l-.618-.619 4.357-4.357z"/></svg>
<div class="bc" style="left:610px;transform:scaleX(0.958)">pages</div>
<svg style="position:absolute;left:678px;top:76px" width="32" height="32" viewBox="0 0 16 16" ><path fill="#a9a9a9" d="M10.072 8.024L5.715 3.667l.618-.62L11 7.716v.618L6.333 13l-.618-.619 4.357-4.357z"/></svg>
<div class="bc" style="left:711px">inicio</div>
<svg style="position:absolute;left:771px;top:76px" width="32" height="32" viewBox="0 0 16 16" ><path fill="#a9a9a9" d="M10.072 8.024L5.715 3.667l.618-.62L11 7.716v.618L6.333 13l-.618-.619 4.357-4.357z"/></svg>
<svg style="position:absolute;left:803px;top:76px" width="32" height="32" viewBox="0 0 16 16" ><path fill="#d6612a" fill-rule="evenodd" d="M1.97 1.93H14.08L13.13 12.92L8 13.93L2.92 12.92z M4.05 4.0H11.95V5.44H5.6V7.1H11.4L11.1 11.3L8 12.25L4.9 11.3L4.6 9.6H5.95V10.6L8 11.1L10.1 10.6V8.35H4.45z"/></svg>
<div class="bc" style="left:847px">inicio.page.html</div>
<svg style="position:absolute;left:1029px;top:76px" width="32" height="32" viewBox="0 0 16 16" ><path fill="#a9a9a9" d="M10.072 8.024L5.715 3.667l.618-.62L11 7.716v.618L6.333 13l-.618-.619 4.357-4.357z"/></svg>
<div class="bc" style="left:1061px;transform:scaleX(0.93)">...</div>
<div style="position:absolute;left:574px;top:114px;right:0;height:38px;box-sizing:border-box;border:4px solid #282828;border-right:none"></div>
<div style="position:absolute;left:574px;top:190px;width:2px;height:418px;background:#404040"></div>
<div style="position:absolute;left:604.8px;top:228px;width:2px;height:114px;background:#404040"></div>
<div style="position:absolute;left:604.8px;top:456px;width:2px;height:76px;background:#404040"></div>
<div class="ln" style="top:114px;color:#cccccc">1</div>
<div class="ln" style="top:152px;color:#6e7681">2</div>
<div class="cl" style="top:152px"><span class="p">&lt;</span><span class="t">ion-content</span> <span class="a">class</span><span class="x">=</span><span class="s">&quot;ion-padding background-container&quot;</span><span class="p">&gt;</span></div>
<div class="ln" style="top:190px;color:#6e7681">3</div>
<div class="cl" style="top:190px">  <span class="p">&lt;</span><span class="t">ion-title</span> <span class="a">class</span><span class="x">=</span><span class="s">&quot;welcome-container&quot;</span><span class="p">&gt;</span><span class="x">Reconearth</span></div>
<div class="ln" style="top:228px;color:#6e7681">4</div>
<div class="ln" style="top:266px;color:#6e7681">5</div>
<div class="cl" style="top:266px">    <span class="p">&lt;</span><span class="t">div</span> <span class="a">class</span><span class="x">=</span><span class="s">&quot;centradototal&quot;</span><span class="p">&gt;</span></div>
<div class="ln" style="top:304px;color:#6e7681">6</div>
<div class="cl" style="top:304px">    <span class="p">&lt;/</span><span class="t">div</span><span class="p">&gt;</span></div>
<div class="ln" style="top:342px;color:#6e7681">7</div>
<div class="cl" style="top:342px">  <span class="p">&lt;/</span><span class="t">ion-title</span><span class="p">&gt;</span></div>
<div class="ln" style="top:380px;color:#6e7681">8</div>
<div class="ln" style="top:418px;color:#6e7681">9</div>
<div class="cl" style="top:418px">  <span class="p">&lt;</span><span class="t">div</span> <span class="a">class</span><span class="x">=</span><span class="s">&quot;welcomebotones&quot;</span><span class="p">&gt;</span></div>
<div class="ln" style="top:456px;color:#6e7681">10</div>
<div class="cl" style="top:456px">    <span class="p">&lt;</span><span class="t">ion-button</span> <span class="a">expand</span><span class="x">=</span><span class="s">&quot;full&quot;</span> <span class="a">routerLink</span><span class="x">=</span><span class="s">&quot;/login&quot;</span><span class="p">&gt;</span><span class="x">Iniciar Sesión</span><span class="p">&lt;/</span><span class="t">ion-button</span><span class="p">&gt;</span></div>
<div class="ln" style="top:494px;color:#6e7681">11</div>
<div class="cl" style="top:494px">    <span class="p">&lt;</span><span class="t">ion-button</span> <span class="a">expand</span><span class="x">=</span><span class="s">&quot;full&quot;</span> <span class="a">routerLink</span><span class="x">=</span><span class="s">&quot;/register&quot;</span> <span class="a">color</span><span class="x">=</span><span class="s">&quot;secondary&quot;</span><span class="p">&gt;</span><span class="x">Registrarse</span><span class="p">&lt;/</span><span class="t">ion-button</span><span class="p">&gt;</span></div>
<div class="ln" style="top:532px;color:#6e7681">12</div>
<div class="cl" style="top:532px">  <span class="p">&lt;/</span><span class="t">div</span><span class="p">&gt;</span></div>
<div class="ln" style="top:570px;color:#6e7681">13</div>
<div class="cl" style="top:570px">  <span class="p">&lt;</span><span class="t">div</span> <span class="a">class</span><span class="x">=</span><span class="s">&quot;footer-message&quot;</span><span class="p">&gt;</span><span class="x">Si no tienes una cuenta Registrate</span><span class="p">&lt;/</span><span class="t">div</span><span class="p">&gt;</span></div>
<div class="ln" style="top:608px;color:#6e7681">14</div>
<div class="cl" style="top:608px"><span class="p">&lt;/</span><span class="t">ion-content</span><span class="p">&gt;</span></div>
</body></html>
